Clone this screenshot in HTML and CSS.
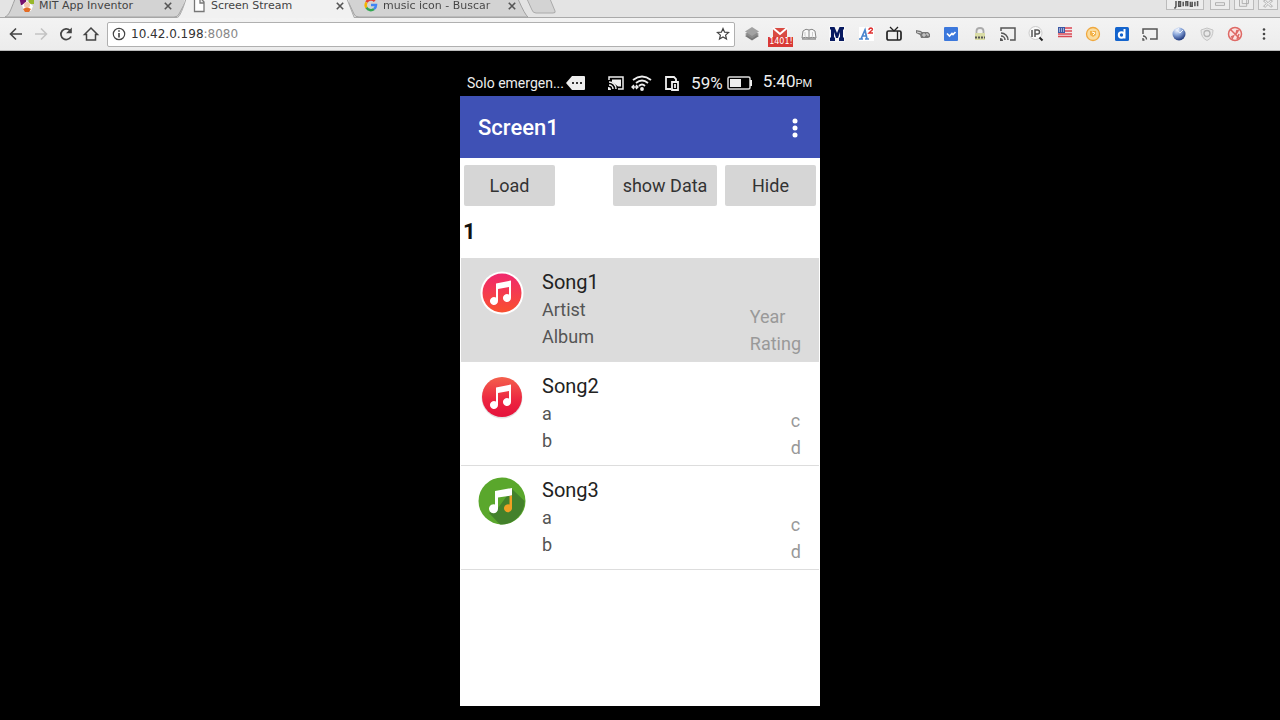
FILE: index.html
```html
<!DOCTYPE html>
<html lang="en">
<head>
<meta charset="utf-8">
<meta name="viewport" content="width=device-width, initial-scale=1">
<title>Screen Stream</title>
<link rel="stylesheet" href="styles.css">
</head>
<body>
<svg class="defs" aria-hidden="true">
  <defs>
    <linearGradient id="pink" x1="0" y1="0" x2="0" y2="1"><stop offset="0" stop-color="#f0286e"/><stop offset="1" stop-color="#f9502f"/></linearGradient>
    <linearGradient id="red" x1="0" y1="0" x2="0" y2="1"><stop offset="0" stop-color="#f4604c"/><stop offset=".6" stop-color="#ec2440"/><stop offset="1" stop-color="#e5123c"/></linearGradient>
    <radialGradient id="globe" cx=".35" cy=".2" r=".85"><stop offset="0" stop-color="#f4f8ff"/><stop offset=".45" stop-color="#8aa6da"/><stop offset="1" stop-color="#122b73"/></radialGradient>
    <symbol id="cast" viewBox="0 0 18 18"><path d="M2 6V3h14v12H11M2 8a7 7 0 0 1 7 7M2 11a4 4 0 0 1 4 4" fill="none" stroke="currentColor" stroke-width="1.5"/><path d="M1 13a3 3 0 0 1 3 3H1z" fill="currentColor"/></symbol>
  </defs>
</svg>
<header class="browser">
  <div class="tabstrip">
    <div class="tab">
      <svg class="tab-shape" viewBox="0 0 179 18" preserveAspectRatio="none"><path d="M0 17C4 15 5 12 10 -1H182L174 14Q173 17 169 17Z" fill="#d3d3d3" stroke="#a2a2a2"/></svg>
      <svg class="favicon" viewBox="0 0 16 16"><path d="M0 0h7v8H2z" fill="#76116f"/><path d="M9 0h6v7h-5z" fill="#98b72b"/><path d="M3 8l5-4 6 5-2 5H5z" fill="#fff"/><circle cx="8" cy="8" r="3" fill="#f2cbb4"/><path d="M4 12q4-3 8 0l-2 3H6z" fill="#e36c25"/></svg>
      <span class="tab-title">MIT App Inventor</span>
      <button class="tab-close" aria-label="Close MIT App Inventor"><svg viewBox="0 0 10 10"><path d="M1 1l8 8M9 1L1 9"/></svg></button>
    </div>
    <div class="tab tab-active">
      <svg class="tab-shape" viewBox="0 0 179 18" preserveAspectRatio="none"><path d="M0 18Q3 17 4 13L9 -1H170L177 18Z" fill="#f1f1f1"/><path d="M1 17Q4 15 9 -1M170 -1L177 17" fill="none" stroke="#aaa"/></svg>
      <svg class="favicon" viewBox="0 0 16 16"><path d="M3.500 1h6l3.500 4v9.500h-9.500zM9 1v5h4" fill="#fff" stroke="#777" stroke-width="1.300"/></svg>
      <span class="tab-title">Screen Stream</span>
      <button class="tab-close" aria-label="Close Screen Stream"><svg viewBox="0 0 10 10"><path d="M1 1l8 8M9 1L1 9"/></svg></button>
    </div>
    <div class="tab">
      <svg class="tab-shape" viewBox="0 0 179 18" preserveAspectRatio="none"><path d="M-2 -1L5 14Q6 17 10 17H179Q176 15 169 -1Z" fill="#d3d3d3" stroke="#a2a2a2"/></svg>
      <svg class="favicon" viewBox="0 0 16 16" fill="none" stroke-width="2.500"><path d="M3.500 5.300A5 5 0 0 1 11.700 4.200" stroke="#e34133"/><path d="M3.500 5.300a5 5 0 0 0 0 5.400" stroke="#f4b400"/><path d="M3.500 10.700a5 5 0 0 0 7.500 1.300" stroke="#34a853"/><path d="M8 8h5a5 5 0 0 1-2 4" stroke="#4285f4"/></svg>
      <span class="tab-title tab-fade">music icon - Buscar</span>
      <button class="tab-close" aria-label="Close music icon"><svg viewBox="0 0 10 10"><path d="M1 1l8 8M9 1L1 9"/></svg></button>
    </div>
    <button class="new-tab" aria-label="New tab"><svg viewBox="0 0 30 14"><path d="M0 -1l5 11q1 3 4 3h17q3 0 2-2L23 -1z" fill="#d3d3d3" stroke="#aaa"/></svg></button>
    <div class="window-controls">
      <button class="win win-user" aria-label="User"><svg viewBox="0 0 38 10"><path d="M7 9q2 0 2-3V1M12 2v5h2V2zM17 2v5M20 7V2h2v5M25 2v5h2V2M30 7V2M33 7V1" fill="none" stroke="#555" stroke-width="1.700"/></svg></button>
      <button class="win" aria-label="Minimize"><svg viewBox="0 0 20 10"><path d="M5 3h10v3H5z"/></svg></button>
      <button class="win" aria-label="Maximize"><svg viewBox="0 0 20 10"><path d="M5 0v7h8V0M8 0v4h7V0"/></svg></button>
      <button class="win" aria-label="Close"><svg viewBox="0 0 20 10"><path d="M7 0l3 3 3-3 2 1-3 3 3 3-2 1-3-3-3 3-2-1 3-3-3-3z"/></svg></button>
    </div>
  </div>
  <div class="toolbar">
    <nav class="nav">
      <button class="tool" aria-label="Back"><svg viewBox="0 0 18 18"><path d="M15 9H4M9 3.500L3.500 9 9 14.500" fill="none" stroke="#444" stroke-width="1.600"/></svg></button>
      <button class="tool" aria-label="Forward"><svg viewBox="0 0 18 18"><path d="M3 9h11M9 3.500L14.500 9 9 14.500" fill="none" stroke="#c3c3c3" stroke-width="1.600"/></svg></button>
      <button class="tool" aria-label="Reload"><svg viewBox="0 0 18 18"><path d="M14 11.500A5.300 5.300 0 1 1 13 5.500" fill="none" stroke="#444" stroke-width="1.700"/><path d="M14.800 2.500v5.800H9z" fill="#444"/></svg></button>
      <button class="tool" aria-label="Home"><svg viewBox="0 0 18 18"><path d="M2.500 9.500L9 3l6.500 6.500H13.500V15h-9V9.500z" fill="none" stroke="#444" stroke-width="1.500"/></svg></button>
    </nav>
    <div class="address">
      <svg class="info" viewBox="0 0 14 14"><circle cx="7" cy="7" r="5.700" fill="none" stroke="#444" stroke-width="1.200"/><path d="M7 6v4.500M7 3.300v1.500" stroke="#444" stroke-width="1.600"/></svg>
      <a class="url" href="#">10.42.0.198<span class="port">:8080</span></a>
      <button class="star" aria-label="Bookmark"><svg viewBox="0 0 14 14"><path d="M7 1.500l1.600 3.700 4 .3-3 2.600.9 4L7 10l-3.500 2.100.9-4-3-2.600 4-.3z" fill="none" stroke="#444" stroke-width="1.200"/></svg></button>
    </div>
    <div class="extensions">
      <button class="tool" aria-label="Layers"><svg viewBox="0 0 18 18"><path d="M2 11l7 4.500 7-4.500-7-4z" fill="#777"/><path d="M2 9l7 4.500L16 9 9 5z" fill="#8b8b8b"/><path d="M2 6.500L9 11l7-4.500L9 2z" fill="#a2a2a2"/></svg></button>
      <button class="tool" aria-label="Mail, 1401"><svg viewBox="0 0 18 18"><path d="M2 3h14v9H2z" fill="#d94b42"/><path d="M2 3l7 6 7-6" fill="none" stroke="#fff" stroke-width="2"/></svg><span class="badge">1401!</span></button>
      <button class="tool" aria-label="Reader"><svg viewBox="0 0 18 18"><path d="M2 13l1-7q3-3 6-1 3-2 6 1l1 7q-4-1.500-7 0-3-1.500-7 0z" fill="#f8f8f8" stroke="#888"/><path d="M9 5v8" stroke="#888"/><path d="M5 7v4M12.500 7v4" stroke="#ccc"/><path d="M2 14h14" stroke="#666"/></svg></button>
      <button class="tool" aria-label="M extension"><svg viewBox="0 0 18 18"><path d="M1 1h16v16H1z" fill="#f7f7f7"/><path d="M2 2h4.500L9 8l2.500-6H16v2.500h-1v8h1V16h-5v-3.500h1V7l-2 6H8L6 7v5.500h1V16H2v-3.500h1v-8H2z" fill="#081a60"/></svg></button>
      <button class="tool" aria-label="Font size"><svg viewBox="0 0 18 18"><path d="M2 2h15v14H2z" fill="#fff"/><path d="M2 14h4M8 14h4M4 14L8 5l2 9M5 11h4" fill="none" stroke="#4a86ce" stroke-width="1.700"/><path d="M12 5q0-2 2-2 3 1 0 3l-2 2h4" fill="none" stroke="#e03131" stroke-width="1.400"/></svg></button>
      <button class="tool" aria-label="TV"><svg viewBox="0 0 18 18"><rect x="2" y="6" width="14" height="9" rx="1.500" fill="#eee" stroke="#222" stroke-width="1.700"/><path d="M12.500 6v9M9 6L5 2M9 6l4-4" stroke="#222" stroke-width="1.300"/></svg></button>
      <button class="tool" aria-label="Camera"><svg viewBox="0 0 18 18"><path d="M2 5l5 1 1 1h6l2 2v3l-2 1H7l-1-3-4-2z" fill="#777"/><path d="M3 7l4 1M9 9h2v2H9zM12 9h2v2" stroke="#ddd" fill="none"/></svg></button>
      <button class="tool" aria-label="Check"><svg viewBox="0 0 18 18"><rect x="2" y="2" width="14" height="14" rx="1" fill="#3c78dc"/><path d="M5 8.500l2.500 2.500L10 8.500l1 1L13.500 7" fill="none" stroke="#fff" stroke-width="1.700"/></svg></button>
      <button class="tool" aria-label="Lock"><svg viewBox="0 0 18 18"><path d="M5.500 9V6q0-3 3.500-3t3.500 3v3" fill="none" stroke="#aaa" stroke-width="1.800"/><path d="M4 8h10v7H4z" fill="#d9dca5"/><path d="M4 12.500h2m1 0h2m1 0h2m1 0h1" stroke="#555" stroke-width="2"/></svg></button>
      <button class="tool cast-dark" aria-label="Cast"><svg viewBox="0 0 18 18"><use href="#cast"/></svg></button>
      <button class="tool" aria-label="IP lookup"><svg viewBox="0 0 18 18"><circle cx="8.500" cy="8" r="6.500" fill="#fafafa" stroke="#ccc"/><path d="M5 5v7M8 12V5h2.500q2 0 2 2t-2 2H8" fill="none" stroke="#555" stroke-width="1.500"/><path d="M12.500 12.500l3 3" stroke="#222" stroke-width="2"/></svg></button>
      <button class="tool" aria-label="United States"><svg viewBox="0 0 18 18"><path d="M2 2h14v10H2z" fill="#f5e6e8"/><path d="M2 3h14M2 6h14M2 9h14M2 11.500h14" stroke="#d94a55" stroke-width="1.500"/><path d="M2 2h7v6H2z" fill="#3d59a5"/><path d="M3 4h5M3 6h5" stroke="#fff" stroke-dasharray="1 1"/></svg></button>
      <button class="tool" aria-label="Coin"><svg viewBox="0 0 18 18"><circle cx="9" cy="9" r="6.500" fill="#fbdc9d" stroke="#efa83f" stroke-width="1.300"/><path d="M6 6h6v4l-3 2-3-2z" fill="#f3b34a"/><path d="M8 7l3 1-2 2" fill="none" stroke="#fff"/></svg></button>
      <button class="tool" aria-label="D extension"><svg viewBox="0 0 18 18"><rect x="2" y="2" width="14" height="14" rx="1.500" fill="#1464cd"/><circle cx="8.500" cy="10" r="2.700" fill="none" stroke="#fff" stroke-width="2"/><path d="M11.500 4v9.500" stroke="#fff" stroke-width="2"/></svg></button>
      <button class="tool" aria-label="Screen cast"><svg viewBox="0 0 18 18"><path d="M2 9V4h14v10H9" fill="none" stroke="#555" stroke-width="1.500"/><path d="M2 11a3.500 3.500 0 0 1 3.500 3.500M2 13v2h1.500" fill="none" stroke="#555" stroke-width="1.400"/></svg></button>
      <button class="tool" aria-label="Globe"><svg viewBox="0 0 18 18"><circle cx="9" cy="9" r="6.500" fill="url(#globe)"/><path d="M9 3q-3 3 1 5M13 5l-3 3" stroke="#eef4ff" fill="none"/></svg></button>
      <button class="tool" aria-label="Shield"><svg viewBox="0 0 18 18"><path d="M9 3l6 2q0 8-6 10.500Q3 13 3 5z" fill="#e9e9e9" stroke="#c4c4c4"/><circle cx="9" cy="8.500" r="3" fill="none" stroke="#b4b4b4" stroke-width="1.300"/></svg></button>
      <button class="tool" aria-label="Blocker"><svg viewBox="0 0 18 18"><circle cx="9" cy="9" r="6.500" fill="#fbe3e2" stroke="#de6965" stroke-width="1.500"/><path d="M4.500 4.500l9 9M5 12l2.500-1L6 14M12.500 5L10 9l1-4M13 9l-2 5" fill="none" stroke="#de6965" stroke-width="1.500"/></svg></button>
      <button class="tool" aria-label="Menu"><svg viewBox="0 0 18 18" fill="#444"><circle cx="9" cy="4.500" r="1.300"/><circle cx="9" cy="9" r="1.300"/><circle cx="9" cy="13.500" r="1.300"/></svg></button>
    </div>
  </div>
</header>
<main class="page">
  <section class="phone">
    <div class="status">
      <span class="carrier">Solo emergen...</span>
      <svg class="message" viewBox="0 0 20 16"><path d="M6 1h12q1 0 1 1v12q0 1-1 1H6L0 8z" fill="#eee"/><path d="M6 7h2v2H6zM10 7h2v2h-2zM14 7h2v2h-2z" fill="#333"/></svg>
      <span class="status-group">
        <svg class="status-icon" viewBox="0 0 18 18"><path d="M5 5.500h9v7h-3L5 8z" fill="#eee"/><use href="#cast"/></svg>
        <svg class="wifi" viewBox="0 0 22 18" fill="none" stroke="#eee" stroke-width="1.800"><path d="M2 6q9-7 18 0M5 9q6-5 12 0M8 12q3-3 6 0"/><circle cx="11" cy="15" r="1" fill="#eee"/><path d="M1 13h6M3 11l-2 2 2 2M5 11l2 2-2 2" stroke-width="1.400"/></svg>
      </span>
      <svg class="status-icon" viewBox="0 0 18 18" fill="none" stroke="#eee" stroke-width="1.800"><path d="M8 15H3V3h8l2 2v2"/><path d="M9 8h6v8H9z"/><path d="M12 10v4"/></svg>
      <span class="status-number">59%</span>
      <svg class="battery" viewBox="0 0 26 16"><rect x="1" y="2" width="22" height="12" rx="1.500" fill="none" stroke="#ddd" stroke-width="1.500"/><path d="M3 4h11v8H3zM23 5h2v6h-2z" fill="#eee"/></svg>
      <span class="status-number">5:40<small>PM</small></span>
    </div>
    <header class="appbar">
      <h1>Screen1</h1>
      <button class="overflow" aria-label="More options"><svg viewBox="0 0 6 20"><circle cx="3" cy="3" r="2.500"/><circle cx="3" cy="10" r="2.500"/><circle cx="3" cy="17" r="2.500"/></svg></button>
    </header>
    <div class="content">
      <div class="actions">
        <button class="action">Load</button>
        <button class="action action-wide">show Data</button>
        <button class="action">Hide</button>
      </div>
      <p class="index">1</p>
      <ul class="songs">
        <li class="song song-selected">
          <svg class="cover" viewBox="0 0 48 48"><circle cx="24" cy="24" r="21.500" fill="#fff"/><circle cx="24" cy="24" r="19.500" fill="url(#pink)"/><path d="M18 14.500l15-3v17.500a4 4 0 1 1-2-3.500V18l-11 2v12a4 4 0 1 1-2-3.500z" fill="#fff"/></svg>
          <div class="song-text"><h2>Song1</h2><p>Artist</p><p>Album</p></div>
          <div class="meta"><p>Year</p><p>Rating</p></div>
        </li>
        <li class="song">
          <svg class="cover" viewBox="0 0 48 48"><circle cx="24" cy="25" r="20.500" fill="#e2e2e2"/><circle cx="24" cy="24" r="20" fill="url(#red)"/><path d="M18 14.500l15-3v17.500a4 4 0 1 1-2-3.500V18l-11 2v12a4 4 0 1 1-2-3.500z" fill="#fff"/></svg>
          <div class="song-text"><h2>Song2</h2><p>a</p><p>b</p></div>
          <div class="meta"><p>c</p><p>d</p></div>
        </li>
        <li class="song">
          <svg class="cover" viewBox="0 0 48 48"><circle cx="24" cy="24" r="23.500" fill="#5aa72c"/><path d="M34 12l12.500 12A23.500 23.500 0 0 1 22 47.400L11 36l9-5z" fill="#43812b"/><path d="M17 14l17-3v7.500l-14 2v11a4.500 4.500 0 1 1-3-4z" fill="#fff"/><path d="M31.500 19l2.500-.5v12.500a4 4 0 1 1-2.500-3.500z" fill="#f1a023"/></svg>
          <div class="song-text"><h2>Song3</h2><p>a</p><p>b</p></div>
          <div class="meta"><p>c</p><p>d</p></div>
        </li>
      </ul>
    </div>
  </section>
</main>
</body>
</html>
```
FILE: styles.css
```css
* { box-sizing: border-box; }

body {
  margin: 0;
  min-height: 100vh;
  display: flex;
  flex-direction: column;
  background: #000;
  font-family: Roboto, "Liberation Sans", sans-serif;
}

button {
  margin: 0;
  padding: 0;
  border: 0;
  background: none;
  font: inherit;
  color: inherit;
}

svg { display: block; flex: none; }
h1, h2, p, ul { margin: 0; padding: 0; }

.defs { position: absolute; width: 0; height: 0; }

/* Browser window */
.browser {
  background: #e4e4e4;
  font-family: "DejaVu Sans", sans-serif;
  border-bottom: 1px solid #bbb;
}

.tabstrip {
  display: flex;
  height: 18px;
  padding-left: 5px;
  border-bottom: 1px solid #aaa;
}

.tab {
  position: relative;
  display: flex;
  align-items: center;
  width: 179px;
  height: 18px;
  margin-right: -7px;
  padding: 0 12px 6px 14px;
  gap: 4px;
}

.tab-shape {
  position: absolute;
  inset: 0;
  width: 100%;
  height: 100%;
}

.tab-active { z-index: 1; }
.favicon { position: relative; width: 16px; height: 16px; margin-top: -2px; }

.tab-title {
  position: relative;
  flex: 1;
  font-size: 11px;
  line-height: 12px;
  color: #444;
  white-space: nowrap;
}

.tab-fade {
  background: linear-gradient(90deg, #444 85%, #bbb);
  background-clip: text;
  color: transparent;
}

.tab-close { position: relative; }
.tab-close svg { width: 8px; height: 8px; fill: none; stroke: #555; stroke-width: 2; }
.new-tab { align-self: flex-start; margin-left: 6px; }
.new-tab svg { width: 30px; height: 14px; }

.window-controls { display: flex; gap: 4px; margin-left: auto; padding-right: 2px; }
.win { width: 20px; height: 10px; border: 1px solid #bbb; border-top: 0; background: #ececec; }
.win svg { width: 100%; height: 9px; fill: none; stroke: #aaa; }
.win-user { width: 38px; margin-right: 2px; }

.toolbar {
  display: flex;
  align-items: center;
  height: 32px;
  padding: 0 7px;
  background: linear-gradient(#f3f3f3, #ececec);
}

.nav { display: flex; gap: 7px; padding-right: 7px; }
.tool { position: relative; width: 18px; height: 18px; }
.tool svg { width: 18px; height: 18px; }
.cast-dark { color: #555; }

.address {
  flex: 1;
  display: flex;
  align-items: center;
  gap: 5px;
  height: 25px;
  padding: 0 4px;
  border: 1px solid #b0b0b0;
  border-radius: 2px;
  background: #fff;
}

.info, .star svg { width: 14px; height: 14px; }
.url { flex: 1; color: #333; font-size: 12px; line-height: 16px; text-decoration: none; }
.port { color: #888; }

.extensions {
  display: flex;
  justify-content: space-between;
  width: 530px;
  margin-left: 8px;
}

.badge {
  position: absolute;
  top: 12px;
  left: -3px;
  width: 25px;
  background: #d93a36;
  color: #fff;
  font-size: 8px;
  line-height: 10px;
  text-align: center;
}

/* Streamed phone screen */
.page { flex: 1; display: flex; justify-content: center; padding: 18px 0 14px; }
.phone { display: flex; flex-direction: column; width: 100%; max-width: 360px; }

.status {
  display: flex;
  align-items: center;
  height: 27px;
  padding: 0 8px 0 7px;
  color: #eee;
}

.carrier { font-size: 14px; line-height: 20px; }
.message { width: 20px; height: 16px; margin-left: 2px; }
.status-group { display: flex; gap: 6px; margin: 0 10px 0 auto; }
.status-icon { width: 18px; height: 18px; }
.wifi { width: 22px; height: 18px; }
.status-number { margin-left: 10px; font-size: 17px; line-height: 20px; }
.battery { width: 26px; height: 16px; margin-left: 4px; }
.status-number small { font-size: 11px; }

.appbar {
  display: flex;
  align-items: center;
  justify-content: space-between;
  height: 62px;
  padding: 2px 22px 0 18px;
  background: #3f51b5;
  color: #fff;
}

.appbar h1 { font-size: 22px; line-height: 28px; font-weight: 500; }
.overflow svg { width: 6px; height: 20px; fill: #fff; }

.content { flex: 1; padding: 7px 1px 0; background: #fff; }
.actions { display: flex; gap: 8px; padding: 0 3px; }

.action {
  flex: 0 0 91px;
  height: 41px;
  border-radius: 2px;
  background: #d6d6d6;
  color: #333;
  font-size: 18px;
  line-height: 24px;
}

.action-wide { flex-basis: 104px; margin-left: auto; }

.index {
  padding: 12px 2px;
  color: #111;
  font-size: 22px;
  line-height: 28px;
  font-weight: 700;
}

.songs { list-style: none; }

.song {
  display: flex;
  gap: 16px;
  padding: 11px 18px 11px 17px;
  border-bottom: 1px solid #ddd;
  color: #555;
  font-size: 18px;
  line-height: 27px;
}

.song-selected { background: #dcdcdc; }
.cover { width: 48px; height: 48px; }
.song-text { flex: 1; }
.song h2 { margin-bottom: 1px; color: #222; font-size: 20px; line-height: 26px; font-weight: 400; }
.meta { align-self: flex-end; margin-bottom: -7px; color: #999; }
```
